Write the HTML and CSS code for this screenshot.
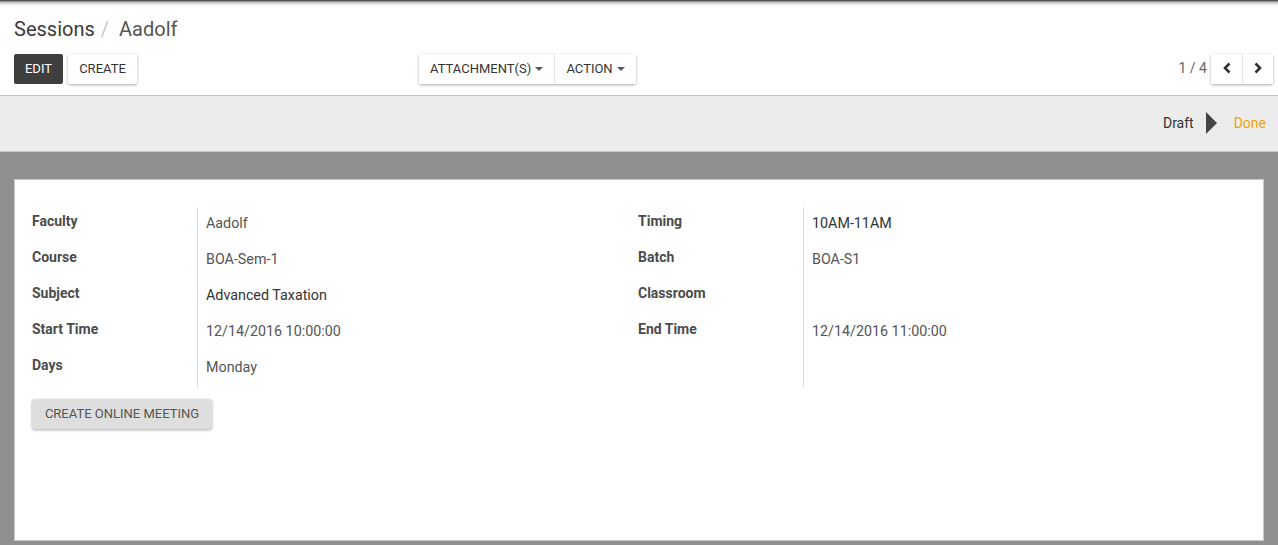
FILE: index.html
```html
<!DOCTYPE html>
<html>
<head>
<meta charset="utf-8">
<link rel="stylesheet" href="styles.css">
</head>
<body>
<div class="cp">
  <div class="breadcrumb"><span class="bc-parent">Sessions</span><span class="bc-sep">/</span><span class="bc-current">Aadolf</span></div>
  <div class="cp-row">
    <div class="cp-buttons">
      <button class="btn btn-dark">EDIT</button>
      <button class="btn btn-light">CREATE</button>
    </div>
    <div class="cp-sidebar">
      <button class="btn btn-group-item">ATTACHMENT(S) <span class="caret"></span></button>
      <button class="btn btn-group-item">ACTION <span class="caret"></span></button>
    </div>
    <div class="cp-pager">
      <span class="pager-value">1 / 4</span>
      <div class="pager-btns">
        <button class="btn pager-btn"><svg width="10" height="12" viewBox="0 0 10 12"><path d="M7.5 1.5 L3 6 L7.5 10.5" fill="none" stroke="#333" stroke-width="2.6"/></svg></button>
        <button class="btn pager-btn"><svg width="10" height="12" viewBox="0 0 10 12"><path d="M2.5 1.5 L7 6 L2.5 10.5" fill="none" stroke="#333" stroke-width="2.6"/></svg></button>
      </div>
    </div>
  </div>
</div>
<div class="statusbar">
  <span class="stage">Draft</span>
  <span class="arrow"></span>
  <span class="stage stage-active">Done</span>
</div>
<div class="sheet-bg">
  <div class="sheet">
    <div class="groups">
      <div class="group">
        <div class="lbl">Faculty</div><div class="val">Aadolf</div>
        <div class="lbl">Course</div><div class="val">BOA-Sem-1</div>
        <div class="lbl">Subject</div><div class="val dark">Advanced Taxation</div>
        <div class="lbl">Start Time</div><div class="val">12/14/2016 10:00:00</div>
        <div class="lbl">Days</div><div class="val">Monday</div>
      </div>
      <div class="group">
        <div class="lbl">Timing</div><div class="val dark">10AM-11AM</div>
        <div class="lbl">Batch</div><div class="val">BOA-S1</div>
        <div class="lbl">Classroom</div><div class="val"></div>
        <div class="lbl">End Time</div><div class="val">12/14/2016 11:00:00</div>
        <div class="lbl"></div><div class="val"></div>
      </div>
    </div>
    <button class="btn btn-meeting">CREATE ONLINE MEETING</button>
  </div>
</div>
</body>
</html>
```

FILE: styles.css
```css
* { box-sizing: border-box; }
html, body { margin: 0; padding: 0; }
body {
  font-family: Roboto, "Noto Sans", sans-serif;
  width: 1278px;
  height: 545px;
  overflow: hidden;
  background: #8f8f8f;
  color: #4c4c4c;
}
.btn {
  font-family: Roboto, sans-serif;
  font-size: 13px;
  border: none;
  cursor: pointer;
  height: 30px;
  padding: 0 11px 1px 11px;
  border-radius: 2px;
  color: #333;
  background: #fff;
}
.cp {
  height: 96px;
  background: linear-gradient(#2e2e2e 0, #7a7a7a 1px, #d8d8d8 3px, #fff 6px);
  border-bottom: 1px solid #c4c4c4;
  padding: 17px 5px 0 14px;
}
.breadcrumb {
  font-size: 20px;
  height: 24px;
  line-height: 24px;
  color: #333;
}
.bc-parent { color: #3a3a3a; }
.bc-sep { color: #c8c8c8; margin: 0 10px 0 6px; }
.bc-current { color: #555; }
.cp-row {
  display: flex;
  align-items: center;
  margin-top: 13px;
  height: 30px;
}
.cp-buttons { display: flex; gap: 5px; }
.btn-dark { background: #3f3f3f; color: #fff; width: 49px; padding: 0 0 1px 0; }
.btn-light { background: #fff; color: #333; width: 69px; padding: 0 0 1px 0; box-shadow: 0 1px 3px rgba(0,0,0,0.35); }
.cp-sidebar {
  display: flex;
  margin-left: 282px;
  box-shadow: 0 1px 3px rgba(0,0,0,0.35);
  border-radius: 2px;
}
.btn-group-item { padding: 0 11px 1px 11px; border-radius: 0; color: #333; }
.btn-group-item + .btn-group-item { border-left: 1px solid #e2e2e2; }
.caret {
  display: inline-block;
  width: 0; height: 0;
  border-left: 4px solid transparent;
  border-right: 4px solid transparent;
  border-top: 4px solid #555;
  vertical-align: middle;
  margin-left: 1px;
  margin-top: -2px;
}
.cp-pager { margin-left: auto; display: flex; align-items: center; }
.pager-value { font-size: 14px; color: #666; margin-right: 4px; margin-top: -2px; }
.pager-btns {
  display: flex;
  box-shadow: 0 1px 3px rgba(0,0,0,0.35);
  border-radius: 2px;
}
.pager-btn { width: 31px; padding: 0 0 2px 0; display: flex; align-items: center; justify-content: center; border-radius: 0; }
.pager-btn + .pager-btn { border-left: 1px solid #e2e2e2; }
.statusbar {
  height: 56px;
  background: #ececec;
  border-bottom: 1px solid #c9c9c9;
  display: flex;
  align-items: center;
  justify-content: flex-end;
  padding-right: 12px;
  padding-bottom: 2px;
  font-size: 14px;
}
.stage { color: #333; }
.stage-active { color: #f0a400; }
.arrow {
  width: 0; height: 0;
  border-top: 11px solid transparent;
  border-bottom: 11px solid transparent;
  border-left: 11px solid #444;
  margin: 0 17px 0 12px;
}
.sheet-bg {
  padding: 27px 14px 0 14px;
}
.sheet {
  height: 362px;
  background: #fff;
  border: 1px solid #c8c8c8;
  padding: 27px 17px 0 17px;
}
.groups { display: grid; grid-template-columns: 606px 1fr; }
.group {
  display: grid;
  grid-template-columns: 165px 1fr;
  grid-auto-rows: 36px;
}
.lbl {
  font-weight: bold;
  font-size: 14px;
  color: #4c4c4c;
  padding-top: 6px;
}
.val {
  border-left: 1px solid #d8d8d8;
  padding-left: 8px;
  padding-top: 7px;
  font-size: 14.3px;
  color: #555;
  line-height: 18px;
}
.val.dark { color: #333; }
.btn-meeting {
  margin-top: 12px;
  width: 180px;
  background: #dedede;
  color: #555;
  font-size: 13px;
  border-radius: 3px;
  box-shadow: 0 1px 3px rgba(0,0,0,0.35);
  padding: 0 0 1px 0;
}
```
